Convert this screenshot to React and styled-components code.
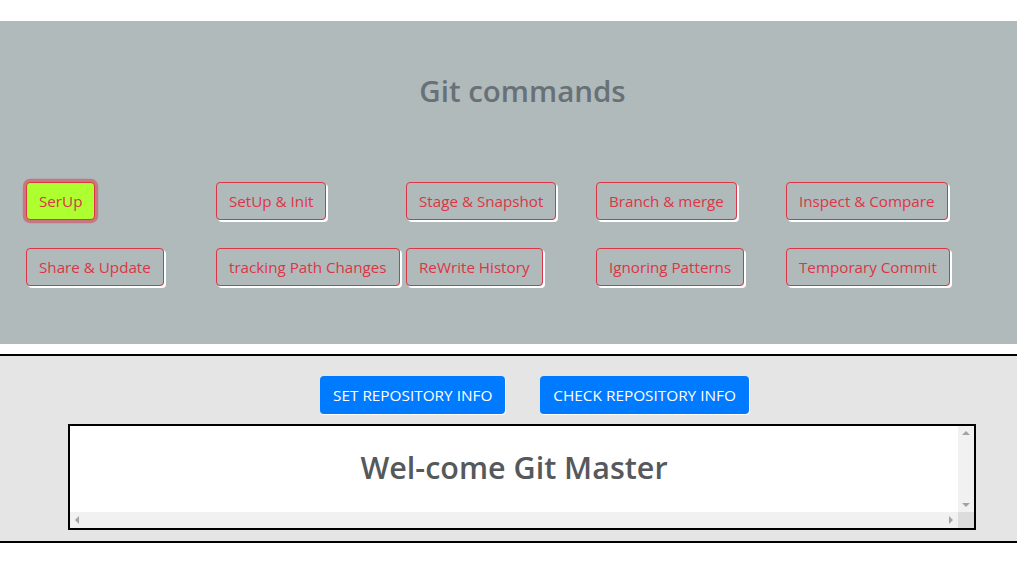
import React from 'react';
import styled, { createGlobalStyle } from 'styled-components';

const GlobalStyle = createGlobalStyle`
    body {
        margin: 0;
        background: #fff;
        font-family: "Open Sans", "Noto Sans", sans-serif;
    }
`;

const Page = styled.div`
    padding-top: 21px;
    width: 1017px;
`;

const CommandsPanel = styled.section`
    background: #b0babb;
    height: 323px;
    display: flex;
    flex-direction: column;
`;

const Title = styled.h2`
    margin: 0;
    padding-top: 50px;
    height: 161px;
    box-sizing: border-box;
    text-align: center;
    font-size: 29.5px;
    line-height: 40px;
    font-weight: 600;
    color: #687078;
    padding-left: 28px;
`;

const CommandGrid = styled.div`
    display: grid;
    grid-template-columns: repeat(5, 190px);
    row-gap: 28px;
    padding-left: 26px;
`;

const CommandButton = styled.button`
    justify-self: start;
    height: 38px;
    padding: 0 12px;
    font-family: inherit;
    font-size: 15.2px;
    color: #dc3545;
    background: ${props => props.active ? '#adff2f' : 'transparent'};
    border: 1px solid #dc3545;
    border-radius: 4px;
    box-shadow: ${props => props.active
        ? '0 0 0 3.2px rgba(220, 53, 69, 0.5)'
        : '2px 2px 0 #fff'};
    cursor: pointer;
`;

const RepoPanel = styled.section`
    margin-top: 10px;
    background: #e5e5e5;
    border-top: 2px solid #000;
    border-bottom: 2px solid #000;
    padding: 20px 0 11px;
`;

const ActionRow = styled.div`
    display: flex;
    gap: 35px;
    padding-left: 320px;
    margin-bottom: 10px;
`;

const ActionButton = styled.button`
    height: 38px;
    padding: 0 13px;
    font-family: inherit;
    font-size: 15.35px;
    color: #fff;
    background: #007bff;
    border: none;
    border-radius: 4px;
    box-shadow: 1px 1px 0 #fff;
    cursor: pointer;
`;

const OutputBox = styled.div`
    margin-left: 68px;
    width: 908px;
    height: 106px;
    box-sizing: border-box;
    border: 2px solid #000;
    background: #fff;
    display: grid;
    grid-template-columns: 1fr 16px;
    grid-template-rows: 1fr 16px;
    overflow: hidden;
`;

const OutputContent = styled.div`
    overflow: hidden;
`;

const Welcome = styled.h1`
    margin: 0;
    padding-top: 20px;
    text-align: center;
    font-size: 30.5px;
    line-height: 42px;
    font-weight: 600;
    color: #55595c;
    white-space: nowrap;
`;

const ScrollTrack = styled.div`
    background: #f1f1f1;
    display: flex;
    flex-direction: ${props => props.vertical ? 'column' : 'row'};
    justify-content: space-between;
    align-items: center;
    padding: ${props => props.vertical ? '5px 0' : '0 5px'};
`;

const ScrollCorner = styled.div`
    background: #dcdcdc;
`;

const Arrow = styled.span`
    width: 0;
    height: 0;
    border: 4px solid transparent;
    ${props => props.dir === 'up' && 'border-bottom-color: #a3a3a3; border-top-width: 0;'}
    ${props => props.dir === 'down' && 'border-top-color: #a3a3a3; border-bottom-width: 0;'}
    ${props => props.dir === 'left' && 'border-right-color: #a3a3a3; border-left-width: 0;'}
    ${props => props.dir === 'right' && 'border-left-color: #a3a3a3; border-right-width: 0;'}
`;

const commands = [
    'SerUp', 'SetUp & Init', 'Stage & Snapshot', 'Branch & merge', 'Inspect & Compare',
    'Share & Update', 'tracking Path Changes', 'ReWrite History', 'Ignoring Patterns', 'Temporary Commit',
];

const App = () => {
    return (
        <Page>
            <GlobalStyle />
            <CommandsPanel>
                <Title>Git commands</Title>
                <CommandGrid>
                    {
                        commands.map((c, i) => (
                            <CommandButton key={ c } active={ i === 0 }>{ c }</CommandButton>
                        ))
                    }
                </CommandGrid>
            </CommandsPanel>
            <RepoPanel>
                <ActionRow>
                    <ActionButton>SET REPOSITORY INFO</ActionButton>
                    <ActionButton>CHECK REPOSITORY INFO</ActionButton>
                </ActionRow>
                <OutputBox>
                    <OutputContent>
                        <Welcome>Wel-come Git Master</Welcome>
                    </OutputContent>
                    <ScrollTrack vertical>
                        <Arrow dir="up" />
                        <Arrow dir="down" />
                    </ScrollTrack>
                    <ScrollTrack>
                        <Arrow dir="left" />
                        <Arrow dir="right" />
                    </ScrollTrack>
                    <ScrollCorner />
                </OutputBox>
            </RepoPanel>
        </Page>
    );
};

export default App;
